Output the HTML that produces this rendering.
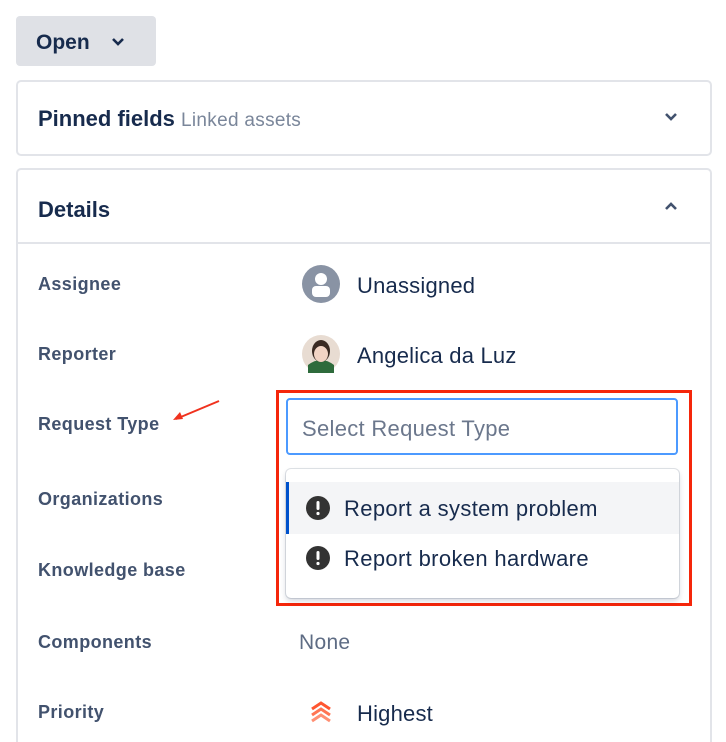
<!DOCTYPE html>
<html><head><style>
html,body{margin:0;width:726px;height:742px;overflow:hidden}
body{background:#fff;font-family:"Liberation Sans",sans-serif;position:relative;color:#172b4d}
.a{position:absolute}
.lbl{position:absolute;left:38px;font-size:18px;font-weight:bold;color:#42526e;letter-spacing:0.4px}
.val{position:absolute;left:357px;font-size:22px;color:#172b4d;letter-spacing:0.2px}
</style></head><body>
<div class="a" style="left:16px;top:16px;width:140px;height:50px;background:#dfe1e6;border-radius:4px"></div>
<div class="a" style="left:36px;top:31px;font-size:21px;font-weight:bold">Open</div>
<svg class="a" style="left:111px;top:37px" width="14" height="10"><path d="M2 2l5 5 5-5" stroke="#172b4d" stroke-width="2.6" fill="none"/></svg>

<div class="a" style="left:16px;top:80px;width:692px;height:72px;border:2px solid #e2e4e9;border-radius:5px"></div>
<div class="a" style="left:38px;top:106px;font-size:22px;font-weight:bold">Pinned fields <span style="font-size:19px;font-weight:normal;color:#7a869a;letter-spacing:0.3px">Linked assets</span></div>
<svg class="a" style="left:664px;top:112px" width="14" height="10"><path d="M2 2l5 5 5-5" stroke="#42526e" stroke-width="2.6" fill="none"/></svg>

<div class="a" style="left:16px;top:168px;width:692px;height:572px;border:2px solid #e2e4e9;border-bottom:none;border-radius:5px 5px 0 0"></div>
<div class="a" style="left:18px;top:242px;width:692px;height:2px;background:#e2e4e9"></div>
<div class="a" style="left:38px;top:197px;font-size:22px;font-weight:bold">Details</div>
<svg class="a" style="left:664px;top:201px" width="14" height="10"><path d="M2 8l5-5 5 5" stroke="#42526e" stroke-width="2.6" fill="none"/></svg>

<div class="lbl" style="top:274px">Assignee</div>
<div class="lbl" style="top:344px">Reporter</div>
<div class="lbl" style="top:414px">Request Type</div>
<div class="lbl" style="top:489px">Organizations</div>
<div class="lbl" style="top:560px">Knowledge base</div>
<div class="lbl" style="top:632px">Components</div>
<div class="lbl" style="top:702px">Priority</div>

<svg class="a" style="left:170px;top:398px" width="52" height="26"><path d="M49 3L6 21" stroke="#f0321e" stroke-width="2"/><path d="M3 22l10-1-3-7z" fill="#f0321e"/></svg>

<svg class="a" style="left:302px;top:265px" width="38" height="38"><circle cx="19" cy="19" r="19" fill="#8993a4"/><circle cx="19" cy="14" r="6" fill="#fff"/><rect x="10" y="21" width="18" height="11" rx="4" fill="#fff"/></svg>
<div class="val" style="top:273px">Unassigned</div>
<svg class="a" style="left:302px;top:335px" width="38" height="38"><circle cx="19" cy="19" r="19" fill="#e8dcd2"/><path d="M6 30q13-10 26 0v8H6z" fill="#2e6b3c"/><ellipse cx="19" cy="16" rx="9" ry="11" fill="#3a2a22"/><ellipse cx="19" cy="19" rx="7" ry="8" fill="#f2d4c4"/></svg>
<div class="val" style="top:343px">Angelica da Luz</div>

<div class="a" style="left:276px;top:390px;width:410px;height:210px;border:3px solid #f5260a"></div>
<div class="a" style="left:286px;top:398px;width:388px;height:53px;border:2px solid #4c9aff;border-radius:4px"></div>
<div class="a" style="left:302px;top:416px;font-size:22px;color:#6b778c;letter-spacing:0.3px">Select Request Type</div>
<div class="a" style="left:286px;top:469px;width:393px;height:129px;border-radius:5px;box-shadow:0 0 0 1px rgba(9,30,66,.12),0 3px 6px rgba(9,30,66,.18);background:#fff"></div>
<div class="a" style="left:286px;top:482px;width:393px;height:52px;background:#f4f5f7;border-left:3px solid #0052cc;box-sizing:border-box"></div>
<svg class="a" style="left:306px;top:496px" width="24" height="24"><circle cx="12" cy="12" r="12" fill="#333"/><rect x="10.5" y="5" width="3" height="9" rx="1.5" fill="#fff"/><circle cx="12" cy="17.5" r="1.6" fill="#fff"/></svg>
<div class="a" style="left:344px;top:496px;font-size:22px;letter-spacing:0.35px">Report a system problem</div>
<svg class="a" style="left:306px;top:546px" width="24" height="24"><circle cx="12" cy="12" r="12" fill="#333"/><rect x="10.5" y="5" width="3" height="9" rx="1.5" fill="#fff"/><circle cx="12" cy="17.5" r="1.6" fill="#fff"/></svg>
<div class="a" style="left:344px;top:546px;font-size:22px;letter-spacing:0.35px">Report broken hardware</div>

<div class="a" style="left:299px;top:631px;font-size:21px;color:#5e6c84;letter-spacing:0.3px">None</div>
<svg class="a" style="left:309px;top:700px" width="24" height="24"><path d="M3 9l9-6 9 6" stroke="#ff5630" stroke-width="3" fill="none"/><path d="M3 15l9-6 9 6" stroke="#ff7452" stroke-width="3" fill="none"/><path d="M3 21l9-6 9 6" stroke="#ff8f73" stroke-width="3" fill="none"/></svg>
<div class="val" style="top:701px">Highest</div>
</body></html>
